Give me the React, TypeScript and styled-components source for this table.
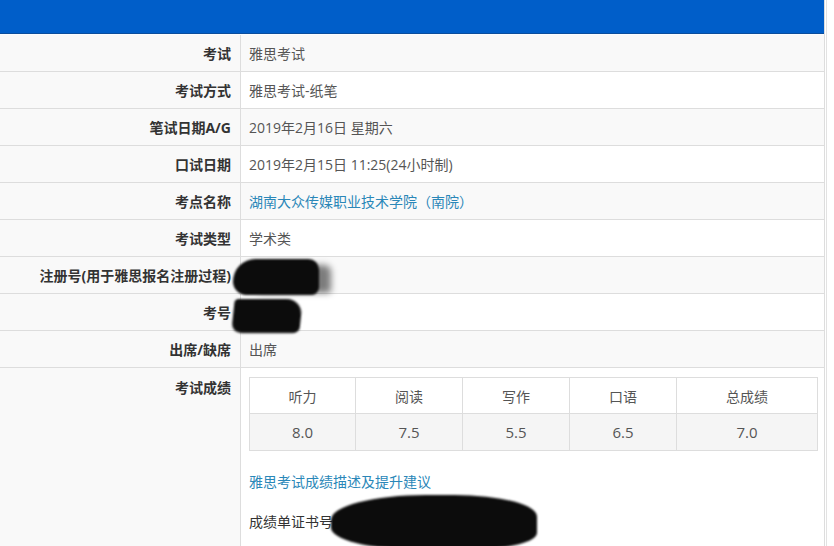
import styled, { createGlobalStyle } from "styled-components";

const GlobalStyle = createGlobalStyle`
  html, body {
    margin: 0;
    padding: 0;
    background: #ffffff;
  }
  body {
    font-family: "Open Sans", "Noto Sans CJK SC", "Noto Sans", sans-serif;
    font-size: 14px;
    color: #555555;
    overflow: hidden;
  }
`;

type Item = {
  label: string;
  value?: string;
  link?: boolean;
  redact?: "reg" | "num";
};

const items: Item[] = [
  { label: "考试", value: "雅思考试" },
  { label: "考试方式", value: "雅思考试-纸笔" },
  { label: "笔试日期A/G", value: "2019年2月16日 星期六" },
  { label: "口试日期", value: "2019年2月15日 11:25(24小时制)" },
  { label: "考点名称", value: "湖南大众传媒职业技术学院（南院）", link: true },
  { label: "考试类型", value: "学术类" },
  { label: "注册号(用于雅思报名注册过程)", redact: "reg" },
  { label: "考号", redact: "num" },
  { label: "出席/缺席", value: "出席" },
];

const scores = [
  { name: "听力", value: "8.0", width: 106 },
  { name: "阅读", value: "7.5", width: 107 },
  { name: "写作", value: "5.5", width: 107 },
  { name: "口语", value: "6.5", width: 107 },
  { name: "总成绩", value: "7.0", width: 141 },
];

export default function App() {
  return (
    <>
      <GlobalStyle />
      <Page>
        <Panel>
          <TopBar />
          <Table>
            {items.map((item, i) => (
              <Row key={item.label} $odd={i % 2 === 0}>
                <Label>{item.label}</Label>
                <Value>
                  {item.link ? <Link>{item.value}</Link> : item.value}
                  {item.redact === "reg" && <RegBlob />}
                  {item.redact === "num" && <NumBlob />}
                </Value>
              </Row>
            ))}
            <Row $odd={false} $tall>
              <Label $top>考试成绩</Label>
              <Value $top>
                <Scores>
                  <colgroup>
                    {scores.map((s) => (
                      <col key={s.name} style={{ width: s.width }} />
                    ))}
                  </colgroup>
                  <thead>
                    <tr>
                      {scores.map((s) => (
                        <ScoreHead key={s.name}>{s.name}</ScoreHead>
                      ))}
                    </tr>
                  </thead>
                  <tbody>
                    <tr>
                      {scores.map((s) => (
                        <ScoreCell key={s.name}>{s.value}</ScoreCell>
                      ))}
                    </tr>
                  </tbody>
                </Scores>
                <ScoreLink>雅思考试成绩描述及提升建议</ScoreLink>
                <Cert>
                  成绩单证书号
                  <CertBlob />
                </Cert>
              </Value>
            </Row>
          </Table>
        </Panel>
        <SideLine />
      </Page>
    </>
  );
}

const Page = styled.div`
  display: flex;
  width: 834px;
  height: 546px;
  overflow: hidden;
`;

const Panel = styled.div`
  width: 824px;
  border-right: 1px solid #dddddd;
  display: flex;
  flex-direction: column;
`;

const SideLine = styled.div`
  width: 1px;
  margin-left: 1px;
  background: #e2e2e2;
`;

const TopBar = styled.div`
  height: 33px;
  background: #005ec9;
  border-bottom: 1px solid #0b4d9c;
  flex: none;
`;

const Table = styled.div`
  display: flex;
  flex-direction: column;
`;

const Row = styled.div<{ $odd: boolean; $tall?: boolean }>`
  display: grid;
  grid-template-columns: 241px 1fr;
  height: ${(p) => (p.$tall ? "auto" : "36px")};
  min-height: ${(p) => (p.$tall ? "200px" : "0")};
  border-bottom: 1px solid #dddddd;
  background: ${(p) => (p.$odd ? "#f9f9f9" : "#ffffff")};
  &:first-child {
    height: 36px;
    border-top: 1px solid #fbfdff;
  }
`;

const Label = styled.div<{ $top?: boolean }>`
  display: flex;
  align-items: ${(p) => (p.$top ? "flex-start" : "center")};
  justify-content: flex-end;
  padding: ${(p) => (p.$top ? "9px 9px 0 0" : "0 9px 0 0")};
  border-right: 1px solid #dddddd;
  font-weight: bold;
  color: #333333;
  white-space: nowrap;
  background: #f9f9f9;
`;

const Value = styled.div<{ $top?: boolean }>`
  position: relative;
  display: flex;
  flex-direction: ${(p) => (p.$top ? "column" : "row")};
  align-items: ${(p) => (p.$top ? "stretch" : "center")};
  padding: ${(p) => (p.$top ? "9px 7px 0 8px" : "0 8px")};
  white-space: nowrap;
`;

const Link = styled.span`
  color: #2a87b8;
`;

const ScoreLink = styled.div`
  color: #2a87b8;
  margin-top: 21px;
  line-height: 20px;
`;

const Blob = styled.span`
  position: absolute;
  background: #0c0c0c;
  filter: blur(1.2px);
`;

const RegBlob = styled(Blob)`
  left: -8px;
  top: 2px;
  width: 86px;
  height: 36px;
  border-radius: 30px 14px 10px 18px;
  box-shadow: 16px 2px 6px -4px rgba(0, 0, 0, 0.5);
`;

const NumBlob = styled(Blob)`
  left: -8px;
  top: 5px;
  width: 68px;
  height: 34px;
  border-radius: 4px 16px 6px 10px;
  transform: skewX(-6deg);
`;

const CertBlob = styled(Blob)`
  left: 82px;
  top: -17px;
  width: 206px;
  height: 54px;
  border-radius: 46% 40% 30% 40%;
`;

const Scores = styled.table`
  width: 568px;
  table-layout: fixed;
  border-collapse: collapse;
  border: 1px solid #dddddd;
  color: #555555;
  font-size: 14px;
  & td,
  & th {
    border: 1px solid #dddddd;
    padding: 0;
  }
`;

const ScoreHead = styled.th`
  height: 35px;
  font-weight: normal;
  text-align: center;
  background: #ffffff;
`;

const ScoreCell = styled.td`
  height: 36px;
  text-align: center;
  background: #f5f5f5;
  font-size: 15px;
`;

const Cert = styled.div`
  position: relative;
  margin-top: 20px;
  line-height: 20px;
  color: #333333;
`;
